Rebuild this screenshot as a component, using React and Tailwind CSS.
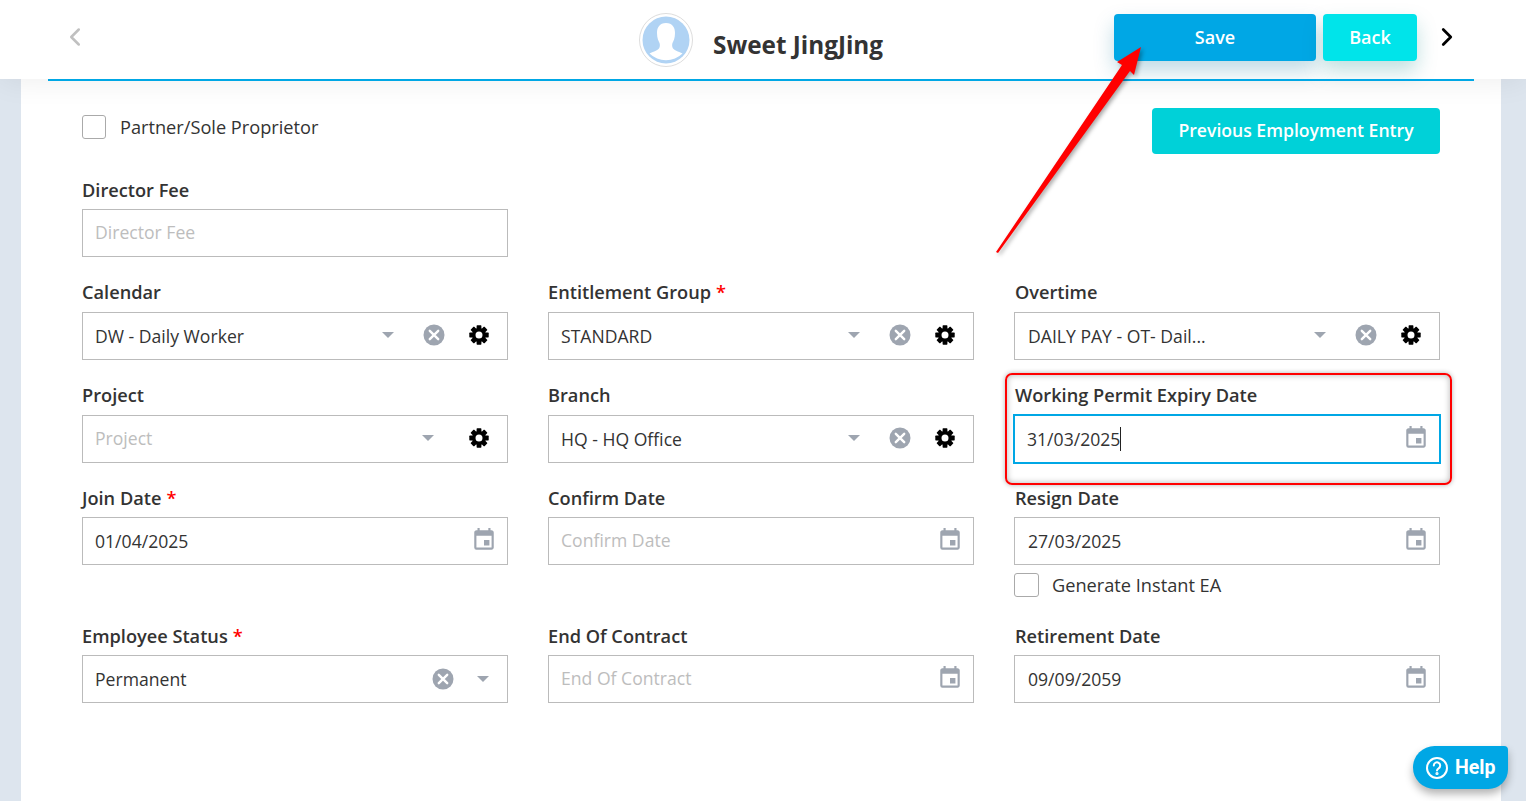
import React from "react";
import { ChevronLeft, ChevronRight } from "lucide-react";
import { MdEvent } from "react-icons/md";

const Caret = () => (
  <svg width="12" height="6" viewBox="0 0 12 6" className="shrink-0"><path d="M0 0h12L6 6z" fill="#9ea5b0" /></svg>
);
const Clear = () => (
  <svg width="22" height="22" viewBox="0 0 22 22" className="shrink-0">
    <circle cx="11" cy="11" r="10.5" fill="#9ea5b0" />
    <path d="M6.8 6.8l8.400 8.400M15.200 6.800l-8.400 8.400" stroke="#fff" strokeWidth="2.4" strokeLinecap="round" />
  </svg>
);
const Gear = () => (
  <svg width="20" height="20" viewBox="0 0 20 20" className="shrink-0">
    <g fill="#000">
      {[0, 45, 90, 135, 180, 225, 270, 315].map((a) => (
        <rect key={a} x="7.600" y="0.300" width="4.800" height="5" rx="0.600" transform={`rotate(${a} 10 10)`} />
      ))}
    </g>
    <circle cx="10" cy="10" r="5.200" fill="none" stroke="#000" strokeWidth="3.400" />
  </svg>
);
const Cal = () => <MdEvent className="shrink-0 text-[26px] text-[#9ea5b0]" />;

function Label({ children, req, high, right }) {
  return (
    <div className={`h-[24px] text-[18.2px] leading-[24px] font-semibold text-[#333] ${high ? "-mt-[1px] mb-[8px]" : "mb-[7px]"} ${right ? "pl-[1px]" : ""}`}>
      {children}
      {req && <span className="text-[#f00] ml-[5px]">*</span>}
    </div>
  );
}

function Box({ children, focus, right }) {
  return (
    <div className={focus ? "h-[50px] -m-[1px] flex items-center pl-[12px] pb-[1px] bg-white border-2 border-[#00a7e5]" : `h-[48px] flex items-center bg-white border border-[#bbb] ${right ? "pl-[13px]" : "pl-[12px]"}`}>
      {children}
    </div>
  );
}

const Value = ({ v, ph }) => (
  <input
    readOnly
    defaultValue={v}
    placeholder={ph}
    className={`flex-1 min-w-0 outline-none bg-transparent text-[17.6px] text-[#333] placeholder:text-[#bdbdbd] ${v ? "" : "pb-[2px]"}`}
  />
);

function SelectField({ label, req, value, ph, clear = true, high, right }) {
  return (
    <div>
      <Label req={req} high={high} right={right}>{label}</Label>
      <Box right={right}>
        <Value v={value} ph={ph} />
        <span className={`flex pb-[2px] ${clear ? "mr-[29px]" : "mr-[35px]"}`}><Caret /></span>
        {clear && <span className="flex pb-[2px] mr-[24px]"><Clear /></span>}
        <span className="flex pb-[2px] mr-[18px]"><Gear /></span>
      </Box>
    </div>
  );
}

function DateField({ label, req, value, ph, focus, high, right, children }) {
  return (
    <div>
      <Label req={req} high={high} right={right}>{label}</Label>
      <Box focus={focus} right={right}>
        {focus ? (
          <div className="flex-1 flex items-center text-[17.6px] text-[#333] pt-[1px]">
            {value}
            <span className="w-px h-[24px] bg-[#222]" />
          </div>
        ) : (
          <Value v={value} ph={ph} />
        )}
        <span className="flex pb-[2px] mr-[10px]"><Cal /></span>
      </Box>
      {children}
    </div>
  );
}

const Check = ({ children, wide }) => (
  <label className={`flex items-center text-[18.2px] leading-[24px] text-[#333] ${wide ? "gap-[13px]" : "gap-[14px]"}`}>
    <span className={`h-[24px] rounded-[3px] border border-[#aaa] bg-white shrink-0 ${wide ? "w-[25px]" : "w-[24px]"}`} />
    <span>{children}</span>
  </label>
);

export default function App() {
  return (
    <div className="relative h-[801px] w-[1526px] overflow-hidden bg-[#dde5ee] font-['Open_Sans',sans-serif]">
      <header className="relative z-10 h-[79px] bg-white flex items-center justify-between pl-[60px] pr-[64px] shadow-[0_2px_30px_rgba(0,0,0,0.07)]">
        <ChevronLeft className="w-[30px] h-[30px] text-[#c0c0c0] -mt-[5px]" strokeWidth={2} />
        <div className="absolute left-[639px] top-[13px] flex items-center gap-[20px]">
          <svg width="54" height="54" viewBox="0 0 54 54">
            <circle cx="27" cy="27" r="26.5" fill="#fff" stroke="#dddddd" />
            <circle cx="27" cy="27" r="23.5" fill="#b0d3f4" />
            <path d="M27 10c-6.500 0-9 4.500-9 10 0 5 1.500 8 2.500 10 .6 1.500.5 4-.5 5.500-2 2-6 3.500-9.500 5a23.500 23.500 0 0 0 33 0c-3.500-1.500-7.500-3-9.500-5-1-1.500-1.100-4-.5-5.500 1-2 2.500-5 2.500-10 0-5.500-2.500-10-9-10z" fill="#fff" />
          </svg>
          <span className="text-[24.3px] font-bold text-[#333] mt-[11px]">Sweet JingJing</span>
        </div>
        <div className="flex items-center">
          <button className="w-[202px] h-[47px] rounded-[4px] bg-[#00a7e5] text-white text-[18px] font-semibold shadow-[0_10px_20px_rgba(0,110,150,0.25)] -mt-[5px]">Save</button>
          <button className="ml-[7px] w-[94px] h-[47px] rounded-[4px] bg-[#00e4ea] text-white text-[18px] font-semibold shadow-[0_10px_20px_rgba(0,130,130,0.25)] -mt-[5px]">Back</button>
          <ChevronRight className="ml-[15px] w-[30px] h-[30px] text-black -mt-[5px]" strokeWidth={2.2} />
        </div>
        <div className="absolute left-[48px] right-[52px] top-[79px] h-[2px] bg-[#00a7e5]" />
      </header>

      <main className="ml-[21px] mr-[25px] h-[722px] bg-white pt-[29px] px-[61px]">
        <div className="flex justify-between h-[46px]">
          <div className="pt-[7px]"><Check>Partner/Sole Proprietor</Check></div>
          <button className="w-[288px] h-[46px] rounded-[4px] bg-[#00d1d8] text-white text-[17.6px] font-semibold pb-[2px]">Previous Employment Entry</button>
        </div>

        <div className="grid grid-cols-[426px_426px_426px] gap-x-[40px] mt-[24px]">
          <div className="h-[103px]">
            <Label>Director Fee</Label>
            <Box><Value ph="Director Fee" /></Box>
          </div>
          <div />
          <div />

          <div className="h-[103px]"><SelectField high label="Calendar" value="DW - Daily Worker" /></div>
          <div className="h-[103px]"><SelectField high label="Entitlement Group" req value="STANDARD" /></div>
          <div className="h-[103px]"><SelectField high right label="Overtime" value="DAILY PAY - OT- Dail..." /></div>

          <div className="h-[102px]"><SelectField high label="Project" ph="Project" clear={false} /></div>
          <div className="h-[102px]"><SelectField high label="Branch" value="HQ - HQ Office" /></div>
          <div className="h-[102px]"><DateField high right label="Working Permit Expiry Date" value="31/03/2025" focus /></div>

          <div className="h-[138px]"><DateField label="Join Date" req value="01/04/2025" /></div>
          <div className="h-[138px]"><DateField label="Confirm Date" ph="Confirm Date" /></div>
          <div className="h-[138px]">
            <DateField right label="Resign Date" value="27/03/2025">
              <div className="mt-[8px]"><Check wide>Generate Instant EA</Check></div>
            </DateField>
          </div>

          <div>
            <Label req>Employee Status</Label>
            <Box>
              <Value v="Permanent" />
              <span className="flex mr-[23px]"><Clear /></span>
              <span className="flex mr-[18px]"><Caret /></span>
            </Box>
          </div>
          <DateField label="End Of Contract" ph="End Of Contract" />
          <DateField right label="Retirement Date" value="09/09/2059" />
        </div>
      </main>

      <div className="absolute z-20 left-[1005px] top-[373px] w-[447px] h-[112px] rounded-[7px] border-2 border-[#f00] shadow-[0_0_5px_rgba(0,0,0,0.3),inset_0_0_6px_rgba(0,0,0,0.3)] pointer-events-none" />

      <svg className="absolute z-20 left-0 top-0 pointer-events-none" width="1526" height="801" style={{ filter: "drop-shadow(2px 2px 2px rgba(0,0,0,0.35))" }}>
        <polygon points="1141,47 1117,62 1122,65 996,252 998,253 1130,71 1134,75" fill="#f00" />
      </svg>

      <button className="absolute z-20 left-[1413px] top-[746px] w-[95px] h-[43px] rounded-l-[22px] rounded-tr-[4px] rounded-br-[20px] bg-[#00a7e5] text-white flex items-center pl-[13px] gap-[7px] font-['Roboto',sans-serif] font-bold text-[19.5px] shadow-[0_5px_8px_rgba(0,0,0,0.3)]">
        <svg width="22" height="22" viewBox="0 0 22 22" fill="none" stroke="#fff" strokeWidth="2">
          <circle cx="11" cy="11" r="10" />
          <path d="M7.800 8.500a3.200 3.200 0 1 1 4.800 2.800c-1 .6-1.600 1.100-1.600 2.200" strokeLinecap="round" />
          <circle cx="11" cy="16.500" r="0.600" fill="#fff" />
        </svg>
        Help
      </button>
    </div>
  );
}
